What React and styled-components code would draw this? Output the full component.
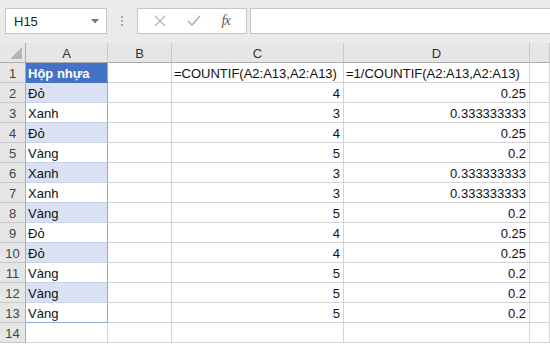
import React from 'react'
import styled, { createGlobalStyle } from 'styled-components'

const Global = createGlobalStyle`
  html, body { margin: 0; padding: 0; overflow: hidden; background: #fff; }
  * { box-sizing: border-box; }
`

const Page = styled.div`
  width: 550px;
  height: 344px;
  overflow: hidden;
  font-family: "Liberation Sans", Arial, sans-serif;
`

const Bar = styled.div`
  height: 43px;
  background: #ebebeb;
  display: flex;
  align-items: flex-start;
  padding: 8px 0 0 5px;
`

const NameBox = styled.div`
  width: 102px;
  height: 26px;
  background: #fff;
  border: 1px solid #c6c6c6;
  display: flex;
  align-items: center;
  justify-content: space-between;
  padding: 0 7px 0 8px;
  font-size: 13px;
  color: #222;
`

const Dots = styled.div`
  width: 30px;
  height: 26px;
  display: flex;
  flex-direction: column;
  align-items: center;
  justify-content: center;
  gap: 2px;
  span {
    width: 2px;
    height: 2px;
    background: #a8a8a8;
  }
`

const FxBox = styled.div`
  width: 110px;
  height: 26px;
  background: #fff;
  border: 1px solid #c6c6c6;
  display: flex;
  align-items: center;
  justify-content: space-around;
  padding: 0 6px;
`

const Fx = styled.span`
  font-family: "Liberation Serif", serif;
  font-style: italic;
  font-size: 14px;
  color: #555;
  letter-spacing: -1px;
`

const Input = styled.div`
  flex: 1;
  height: 26px;
  margin-left: 3px;
  background: #fff;
  border: 1px solid #c6c6c6;
  border-right: none;
`

const Grid = styled.div`
  display: grid;
  grid-template-columns: 26px 82px 64px 172px 186px 1fr;
  grid-auto-rows: 20px;
`

const ColHead = styled.div`
  background: #e6e6e6;
  border-bottom: 1px solid #ababab;
  border-right: 1px solid ${p => (p.$corner ? '#ababab' : '#c8c8c8')};
  display: flex;
  align-items: center;
  justify-content: center;
  font-size: 13px;
  color: #333;
  position: relative;
  padding-top: 1px;
`

const Corner = styled.div`
  position: absolute;
  right: 3px;
  bottom: 3px;
  width: 0;
  height: 0;
  border-left: 12px solid transparent;
  border-bottom: 12px solid #b5b5b5;
`

const RowHead = styled.div`
  background: #e6e6e6;
  border-right: 1px solid #ababab;
  border-bottom: 1px solid #c8c8c8;
  display: flex;
  align-items: center;
  justify-content: center;
  font-size: 13px;
  color: #444;
  padding-top: 1px;
`

const Cell = styled.div`
  border-right: 1px solid #d4d4d4;
  border-bottom: 1px solid #d4d4d4;
  font-size: 13px;
  color: #111;
  line-height: 19px;
  padding: 1px 3px 0 2px;
  white-space: nowrap;
  overflow: visible;
  text-align: ${p => (p.$num ? 'right' : 'left')};
`

const TableCell = styled(Cell)`
  border-right-color: #8eaadb;
  background: ${p => (p.$head ? '#4472c4' : p.$band ? '#d9e1f2' : '#fff')};
  color: ${p => (p.$head ? '#fff' : '#111')};
  font-weight: ${p => (p.$head ? 700 : 400)};
  border-bottom-color: ${p => (p.$last ? '#8eaadb' : p.$head ? '#4472c4' : '#c9d5ec')};
`

const rows = [
  ['Đỏ', 4, '0.25'],
  ['Xanh', 3, '0.333333333'],
  ['Đỏ', 4, '0.25'],
  ['Vàng', 5, '0.2'],
  ['Xanh', 3, '0.333333333'],
  ['Xanh', 3, '0.333333333'],
  ['Vàng', 5, '0.2'],
  ['Đỏ', 4, '0.25'],
  ['Đỏ', 4, '0.25'],
  ['Vàng', 5, '0.2'],
  ['Vàng', 5, '0.2'],
  ['Vàng', 5, '0.2'],
]

const Cross = () => (
  <svg width="12" height="12" viewBox="0 0 12 12">
    <path d="M1 1L11 11M11 1L1 11" stroke="#b4b4b4" strokeWidth="1.3" fill="none" />
  </svg>
)

const Check = () => (
  <svg width="14" height="12" viewBox="0 0 14 12">
    <path d="M1 6L5 10L13 1" stroke="#b4b4b4" strokeWidth="1.6" fill="none" />
  </svg>
)

const Caret = () => (
  <svg width="8" height="5" viewBox="0 0 8 5">
    <path d="M0 0H8L4 4.5Z" fill="#777" />
  </svg>
)

export default function App() {
  return (
    <Page>
      <Global />
      <Bar>
        <NameBox>
          <span>H15</span>
          <Caret />
        </NameBox>
        <Dots><span /><span /><span /></Dots>
        <FxBox>
          <Cross />
          <Check />
          <Fx>fx</Fx>
        </FxBox>
        <Input />
      </Bar>
      <Grid>
        <ColHead $corner><Corner /></ColHead>
        <ColHead>A</ColHead>
        <ColHead>B</ColHead>
        <ColHead>C</ColHead>
        <ColHead>D</ColHead>
        <ColHead />

        <RowHead>1</RowHead>
        <TableCell $head>Hộp nhựa</TableCell>
        <Cell />
        <Cell>=COUNTIF(A2:A13,A2:A13)</Cell>
        <Cell>=1/COUNTIF(A2:A13,A2:A13)</Cell>
        <Cell />

        {rows.map(([name, count, inv], i) => (
          <React.Fragment key={i}>
            <RowHead>{i + 2}</RowHead>
            <TableCell $band={i % 2 === 0} $last={i === rows.length - 1}>{name}</TableCell>
            <Cell />
            <Cell $num>{count}</Cell>
            <Cell $num>{inv}</Cell>
            <Cell />
          </React.Fragment>
        ))}

        <RowHead>14</RowHead>
        <Cell />
        <Cell />
        <Cell />
        <Cell />
        <Cell />
      </Grid>
    </Page>
  )
}
